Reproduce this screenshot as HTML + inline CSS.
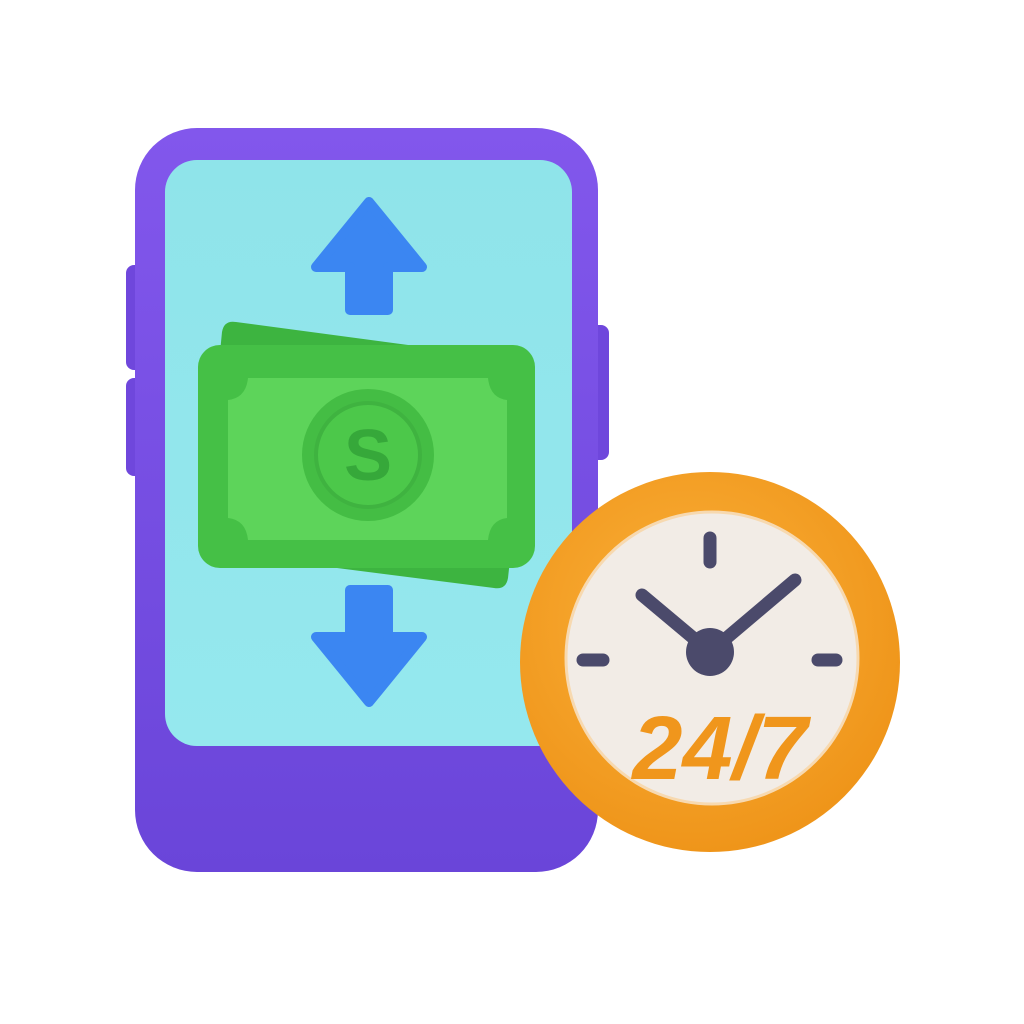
<!DOCTYPE html>
<html><head><meta charset="utf-8"><style>
html,body{margin:0;padding:0;background:#fff;}
svg{display:block;}
</style></head><body>
<svg width="1024" height="1024" viewBox="0 0 1024 1024" xmlns="http://www.w3.org/2000/svg">
<defs>
<linearGradient id="ph" x1="0" y1="0" x2="0" y2="1">
<stop offset="0" stop-color="#8257ec"/><stop offset="1" stop-color="#6a45d9"/></linearGradient>
<linearGradient id="sc" x1="0" y1="0" x2="0" y2="1">
<stop offset="0" stop-color="#8fe4ea"/><stop offset="1" stop-color="#95e8ee"/></linearGradient>
<radialGradient id="or" cx="0.45" cy="0.4" r="0.6">
<stop offset="0" stop-color="#fbb13a"/><stop offset="1" stop-color="#ef951a"/></radialGradient>
</defs>
<rect x="126" y="265" width="20" height="105" rx="8" fill="#6f47dc"/>
<rect x="126" y="378" width="20" height="98" rx="8" fill="#6f47dc"/>
<rect x="588" y="325" width="21" height="135" rx="8" fill="#6f47dc"/>
<rect x="135" y="128" width="463" height="744" rx="62" fill="url(#ph)"/>
<rect x="165" y="160" width="407" height="586" rx="32" fill="url(#sc)"/>
<g fill="#3b86f2" stroke="#3b86f2" stroke-width="10" stroke-linejoin="round">
<path d="M369 202 L422 267 L388 267 L388 310 L350 310 L350 267 L316 267 Z"/>
<path d="M369 702 L422 637 L388 637 L388 590 L350 590 L350 637 L316 637 Z"/>
</g>
<path d="M236 322 L520 360 Q532 362 530 375 L508 578 Q506 590 494 588 L212 552 Q200 550 202 538 L222 332 Q224 320 236 322 Z" fill="#3db440"/>
<rect x="198" y="345" width="337" height="223" rx="22" fill="#45c046"/>
<path d="M248 378 L488 378 Q490 398 507 400 L507 518 Q490 520 488 540 L248 540 Q246 520 228 518 L228 400 Q246 398 248 378 Z" fill="#5dd45a"/>
<circle cx="368" cy="455" r="66" fill="#44bd44"/>
<circle cx="368" cy="455" r="52" fill="#4cc84a" stroke="#3fb340" stroke-width="4"/>
<text x="368" y="480" text-anchor="middle" font-family="Liberation Sans, sans-serif" font-weight="bold" font-size="72" fill="#36a83a">S</text>
<circle cx="710" cy="662" r="190" fill="url(#or)"/>
<circle cx="712" cy="658" r="146" fill="#f2ece6" stroke="#f7d9b0" stroke-width="3"/>
<g stroke="#4b4a6b" stroke-width="13" stroke-linecap="round">
<line x1="710" y1="538" x2="710" y2="562"/>
<line x1="583" y1="660" x2="603" y2="660"/>
<line x1="818" y1="660" x2="836" y2="660"/>
<line x1="710" y1="652" x2="642" y2="595"/>
<line x1="710" y1="652" x2="795" y2="580"/>
</g>
<circle cx="710" cy="652" r="24" fill="#4b4a6b"/>
<text x="720" y="779" text-anchor="middle" font-family="Liberation Sans, sans-serif" font-weight="bold" font-style="italic" font-size="90" fill="#f0961c">24/7</text>
</svg>
</body></html>
